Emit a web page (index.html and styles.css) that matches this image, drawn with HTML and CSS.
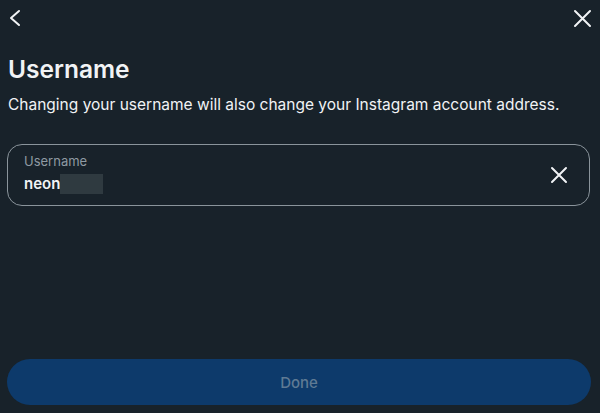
FILE: index.html
```html
<!DOCTYPE html>
<html>
<head>
<meta charset="utf-8">
<link rel="stylesheet" href="styles.css">
</head>
<body>
<div class="page">
  <div class="topbar">
    <button class="icon-btn" aria-label="Back">
      <svg width="24" height="24" viewBox="0 0 24 24"><path d="M12 5 L4 12 L12 19" fill="none" stroke="#f1f3f5" stroke-width="2" stroke-linecap="round" stroke-linejoin="round"/></svg>
    </button>
    <button class="icon-btn" aria-label="Close">
      <svg width="24" height="24" viewBox="0 0 24 24"><path d="M5 5 L20 20 M20 5 L5 20" fill="none" stroke="#f1f3f5" stroke-width="2" stroke-linecap="round"/></svg>
    </button>
  </div>
  <h1 class="title">Username</h1>
  <p class="subtitle">Changing your username will also change your Instagram account address.</p>
  <div class="field">
    <div class="field-text">
      <div class="field-label">Username</div>
      <div class="field-value">neon<span class="redact"></span></div>
    </div>
    <button class="icon-btn clear" aria-label="Clear">
      <svg width="20" height="20" viewBox="0 0 20 20"><path d="M3 3 L17 17 M17 3 L3 17" fill="none" stroke="#f1f3f5" stroke-width="2" stroke-linecap="round"/></svg>
    </button>
  </div>
  <div class="spacer"></div>
  <button class="done">Done</button>
</div>
</body>
</html>
```
FILE: styles.css
```css
html, body {
  margin: 0;
  padding: 0;
  background: #18222a;
  height: 100%;
}
.page {
  height: 413px;
  box-sizing: border-box;
  display: flex;
  flex-direction: column;
  padding: 6px 6px 8px 7px;
  font-family: Inter, "Noto Sans", sans-serif;
  color: #f1f3f5;
}
.topbar {
  display: flex;
  justify-content: space-between;
  align-items: center;
  height: 24px;
}
.icon-btn {
  background: none;
  border: 0;
  padding: 0;
  display: flex;
  cursor: pointer;
}
.title {
  margin: 25px 0 0 1px;
  font-size: 24.5px;
  font-weight: 600;
  line-height: 29px;
}
.subtitle {
  margin: 11px 0 0 1px;
  font-size: 15.5px;
  line-height: 20px;
  font-weight: 400;
}
.field {
  margin: 29px 4px 0 0;
  height: 62px;
  box-sizing: border-box;
  border: 1px solid #8a949b;
  border-radius: 15px;
  display: flex;
  align-items: flex-start;
  padding: 8px 20px 0 16px;
}
.field-text {
  flex: 1;
  display: flex;
  flex-direction: column;
  gap: 5px;
}
.field-label {
  font-size: 13px;
  line-height: 16px;
  color: #8f9aa2;
}
.field-value {
  font-size: 15px;
  line-height: 20px;
  font-weight: 600;
  display: flex;
  align-items: center;
}
.redact {
  display: inline-block;
  width: 43px;
  height: 20px;
  background: #2f3a40;
}
.clear {
  margin-top: 12px;
}
.spacer { flex: 1; }
.done {
  height: 46px;
  border: 0;
  border-radius: 23px;
  background: #0d3a6b;
  color: #5f7a94;
  font-family: Inter, "Noto Sans", sans-serif;
  font-size: 15px;
  font-weight: 500;
  margin-right: 3px;
}
```
